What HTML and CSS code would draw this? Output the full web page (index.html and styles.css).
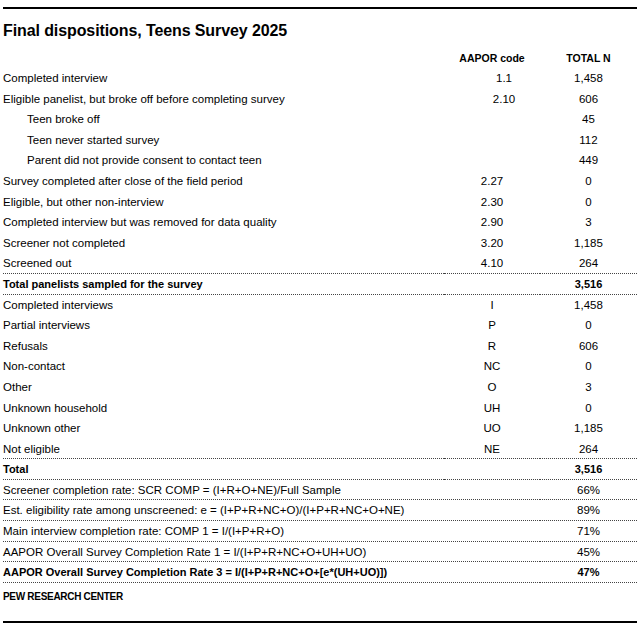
FILE: index.html
```html
<!DOCTYPE html>
<html lang="en">
<head>
    <meta charset="UTF-8">
    <meta name="viewport" content="width=device-width, initial-scale=1.0">
    <title>Final dispositions, Teens Survey 2025</title>
    <link rel="stylesheet" href="styles.css">
</head>
<body>
    <div class="chart">
        <h1 class="title">Final dispositions, Teens Survey 2025</h1>

        <table class="dispositions">
            <colgroup>
                <col>
                <col class="col-code">
                <col class="col-total">
            </colgroup>
            <thead>
                <tr>
                    <th></th>
                    <th>AAPOR code</th>
                    <th>TOTAL N</th>
                </tr>
            </thead>
            <tbody>
                <tr><td>Completed interview</td><td class="shift">1.1</td><td>1,458</td></tr>
                <tr><td>Eligible panelist, but broke off before completing survey</td><td class="shift">2.10</td><td>606</td></tr>
                <tr><td class="sub">Teen broke off</td><td></td><td>45</td></tr>
                <tr><td class="sub">Teen never started survey</td><td></td><td>112</td></tr>
                <tr><td class="sub">Parent did not provide consent to contact teen</td><td></td><td>449</td></tr>
                <tr><td>Survey completed after close of the field period</td><td>2.27</td><td>0</td></tr>
                <tr><td>Eligible, but other non-interview</td><td>2.30</td><td>0</td></tr>
                <tr><td>Completed interview but was removed for data quality</td><td>2.90</td><td>3</td></tr>
                <tr><td>Screener not completed</td><td>3.20</td><td>1,185</td></tr>
                <tr class="rule"><td>Screened out</td><td>4.10</td><td>264</td></tr>
                <tr class="rule strong"><td>Total panelists sampled for the survey</td><td></td><td>3,516</td></tr>

                <tr><td>Completed interviews</td><td>I</td><td>1,458</td></tr>
                <tr><td>Partial interviews</td><td>P</td><td>0</td></tr>
                <tr><td>Refusals</td><td>R</td><td>606</td></tr>
                <tr><td>Non-contact</td><td>NC</td><td>0</td></tr>
                <tr><td>Other</td><td>O</td><td>3</td></tr>
                <tr><td>Unknown household</td><td>UH</td><td>0</td></tr>
                <tr><td>Unknown other</td><td>UO</td><td>1,185</td></tr>
                <tr class="rule"><td>Not eligible</td><td>NE</td><td>264</td></tr>
                <tr class="rule strong"><td>Total</td><td></td><td>3,516</td></tr>

                <tr class="rule"><td colspan="2">Screener completion rate: SCR COMP = (I+R+O+NE)/Full Sample</td><td>66%</td></tr>
                <tr class="rule"><td colspan="2">Est. eligibility rate among unscreened: e = (I+P+R+NC+O)/(I+P+R+NC+O+NE)</td><td>89%</td></tr>
                <tr class="rule"><td colspan="2">Main interview completion rate: COMP 1 = I/(I+P+R+O)</td><td>71%</td></tr>
                <tr class="rule"><td colspan="2">AAPOR Overall Survey Completion Rate 1 = I/(I+P+R+NC+O+UH+UO)</td><td>45%</td></tr>
                <tr class="rule strong"><td colspan="2">AAPOR Overall Survey Completion Rate 3 = I/(I+P+R+NC+O+[e*(UH+UO)])</td><td>47%</td></tr>
            </tbody>
        </table>

        <div class="source">PEW RESEARCH CENTER</div>
    </div>
</body>
</html>
```

FILE: styles.css
```css
* {
    margin: 0;
    padding: 0;
    box-sizing: border-box;
}

body {
    font-family: 'Liberation Sans', Arial, sans-serif;
    color: #000;
    background: #fff;
    padding-top: 7px;
}

.chart {
    margin: 0 3px;
    border-top: 2px solid #000;
    border-bottom: 2px solid #000;
    padding-bottom: 17px;
}

.title {
    margin-top: 12px;
    font-size: 16px;
    font-weight: 700;
    line-height: 20px;
    letter-spacing: -0.1px;
}

.dispositions {
    width: 100%;
    margin-top: 6px;
    border-collapse: separate;
    border-spacing: 0;
    table-layout: fixed;
    font-size: 11.5px;
}

.col-code {
    width: 96px;
}

.col-total {
    width: 97px;
}

.dispositions th {
    height: 21px;
    font-size: 10.5px;
    font-weight: 700;
    text-align: center;
    line-height: 20px;
    vertical-align: middle;
}

.dispositions td {
    line-height: 20.6px;
    text-align: center;
    white-space: nowrap;
    vertical-align: middle;
}

.dispositions td:first-child {
    text-align: left;
}

.dispositions td.sub {
    padding-left: 24px;
}

.dispositions td.shift {
    padding-left: 24px;
}

.rule td {
    padding-top: 2px;
    line-height: 17.6px;
    border-bottom: 1px dotted #444;
}

.strong td {
    font-size: 11px;
    font-weight: 700;
}

.source {
    margin-top: 7px;
    font-size: 10px;
    font-weight: 700;
    line-height: 14px;
    letter-spacing: -0.3px;
}
```
